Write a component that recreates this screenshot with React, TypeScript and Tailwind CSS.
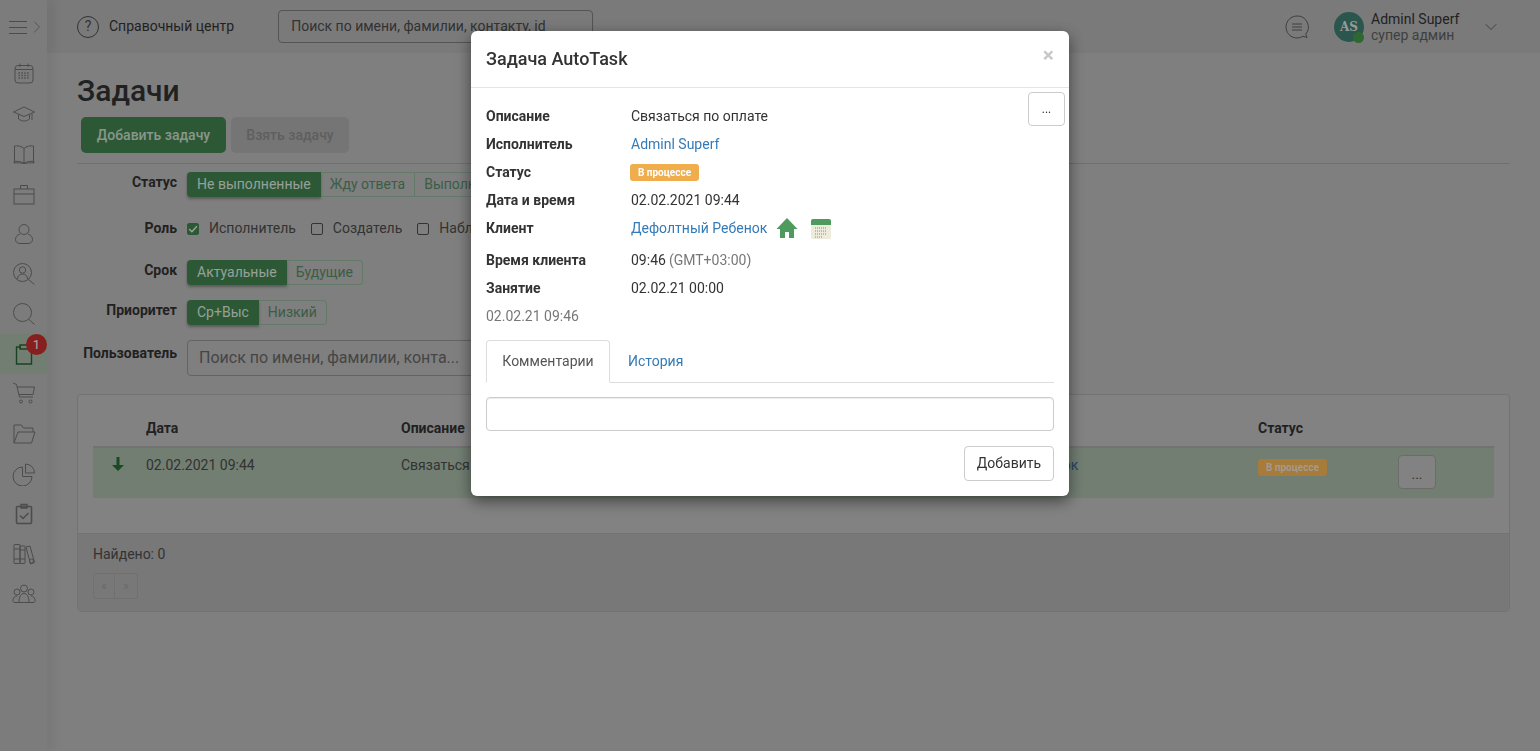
import { ChevronDown, ChevronRight } from "lucide-react";

const FONT = { fontFamily: "Roboto, sans-serif" };

// sidebar icons are thin outline drawings on a 24 box
const NAV_PATHS: React.ReactNode[] = [
  <>
    <rect x="3" y="3.500" width="18" height="17.500" rx="3" />
    <path d="M8 1.500V5M16 1.500V5M3 7.500h18" />
    <path d="M6.500 11h11M6.500 13.500h11M6.500 16h11" strokeWidth="1.400" strokeDasharray="1.400 1.500" />
  </>,
  <>
    <path d="M1.500 10L12 5l10.500 5L12 14.500z" />
    <path d="M6.500 12.500V17c2 1.500 3.500 2 5.500 2s3.500-.5 5.500-2v-4.500" />
    <path d="M20 11.500V18" />
  </>,
  <>
    <path d="M12 6.500C9.500 4 5.500 3.500 2.500 4v15.500c3.500-.5 7 0 9.500 2 2.500-2 6-2.500 9.500-2V4c-3-.5-7 0-9.500 2.500z" />
    <path d="M12 6.500v15M2.500 19.500h-.500v1.500c3.500-.5 7 0 10 .500 3-.5 6.500-1 10-.500v-1.500h-.500" />
  </>,
  <>
    <rect x="2" y="7" width="20" height="15" />
    <path d="M8.500 7V3.500h7V7M2 12h20" />
  </>,
  <>
    <circle cx="12" cy="7.500" r="5" />
    <path d="M8 12c-3 1-4.500 3-4.500 5.500 0 2.500 2 4 4.500 4h8c2.500 0 4.500-1.500 4.500-4 0-2.500-1.500-4.500-4.500-5.500" />
  </>,
  <>
    <circle cx="10.500" cy="10.500" r="9" />
    <circle cx="10.500" cy="8" r="3.200" />
    <path d="M5.500 17c0-3 2-5 5-5s5 2 5 5" />
    <path d="M16.500 17.500l6 5" />
  </>,
  <>
    <circle cx="10.500" cy="10.500" r="9" />
    <path d="M17 17.500l5.500 5" />
  </>,
  <>
    <path d="M9 5H4.500v17h15V9" strokeWidth="1.400" />
    <path d="M8 3h8v4H8z" strokeWidth="1.400" />
  </>,
  <>
    <path d="M1 1l3.500 1.500L7.500 15h13.500" />
    <path d="M5 5h17.500l-1.500 7.500H7" />
    <circle cx="9" cy="19.500" r="1.500" />
    <circle cx="18.500" cy="19.500" r="1.500" />
  </>,
  <>
    <path d="M2 21V3h7.500l2 3h9.500v4" />
    <path d="M2 21h17.500L23 10H6z" />
  </>,
  <>
    <path d="M10.500 5a9.500 9.500 0 1 0 9.500 9.500h-9.500z" />
    <path d="M13.500 2a9 9 0 0 1 9 9h-9z" />
  </>,
  <>
    <rect x="4.500" y="4.500" width="15" height="17" rx="1" strokeWidth="1.600" />
    <path d="M9 2.500h6V6H9z" strokeWidth="1.400" />
    <path d="M8 13.500l3 3 5.500-5.500" strokeWidth="1.500" />
  </>,
  <>
    <rect x="2" y="2.500" width="6" height="19" rx=".5" />
    <rect x="8" y="4" width="5" height="17.500" rx=".5" />
    <path d="M2 7h6M2 17h6M8 8h5M8 17h5" />
    <path d="M14 5l4-1 4.500 16.500-4 1.500z" />
    <circle cx="19.500" cy="19" r="2" />
  </>,
  <>
    <circle cx="12" cy="6.500" r="3.500" />
    <circle cx="5" cy="10" r="3" />
    <circle cx="19" cy="10" r="3" />
    <path d="M7 20.500c0-6 2-9 5-9s5 3 5 9z" />
    <path d="M7 20.500H3c-2 0-2.500-1.500-2-3 .5-2 2-3.500 4-3.500M17 20.500h4c2 0 2.500-1.500 2-3-.5-2-2-3.500-4-3.500" />
  </>,
];

function Sidebar() {
  return (
    <aside className="z-10 w-[47px] shrink-0 bg-[#a6a6a6] text-[#666666] shadow-[8px_0_8px_rgba(0,0,0,.05)]">
      <div className="flex h-[54px] items-center pl-[9px]">
        <div className="flex w-[18px] flex-col gap-[5px]">
          <div className="h-px bg-[#666]" />
          <div className="h-px bg-[#666]" />
          <div className="h-px bg-[#666]" />
        </div>
        <ChevronRight size={20} strokeWidth={1} />
      </div>
      {NAV_PATHS.map((icon, i) => (
        <div
          key={i}
          className={
            "relative flex h-[40px] items-center justify-center " +
            (i === 7 ? "bg-[#98a999] text-[#23582e]" : "")
          }
        >
          <svg width="24" height="24" viewBox="0 0 24 24" fill="none" stroke="currentColor" strokeWidth="1">
            {icon}
          </svg>
          {i === 7 && (
            <span className="absolute left-[26px] top-0 flex h-[21px] w-[21px] items-center justify-center rounded-full bg-[#b52a2a] text-[13px] text-[#e0e0e0]">
              1
            </span>
          )}
        </div>
      ))}
    </aside>
  );
}

function Header() {
  return (
    <header className="flex h-[53px] items-center bg-[#a3a3a3] pl-[30px] pr-[39px] text-[14px] text-[#2d2d2d]">
      <div className="flex h-[22px] w-[22px] items-center justify-center rounded-full border border-[#444] text-[14px] text-[#444]">
        ?
      </div>
      <span className="ml-[10px]">Справочный центр</span>
      <div className="ml-[44px] flex h-[33px] w-[315px] items-center rounded-[4px] border border-[#707070] pl-[12px] text-[#444]">
        Поиск по имени, фамилии, контакту, id
      </div>
      <div className="ml-auto flex items-center">
        <svg width="26" height="26" viewBox="0 0 26 26" fill="none" stroke="#555" strokeWidth="1">
          <path d="M13 2a11 11 0 1 0 6 20.200l4 1.300-1.200-3.500A11 11 0 0 0 13 2z" />
          <path d="M8 10h10M8 13h10M8 16h10" />
        </svg>
        <div
          className="relative ml-[24px] flex h-[30px] w-[30px] items-center justify-center rounded-full bg-[#3a7368] text-[12px] font-bold text-[#ccc]"
          style={{ fontFamily: "'DejaVu Serif', serif" }}
        >
          AS
          <span className="absolute left-[19px] top-[20px] h-[11px] w-[11px] rounded-full bg-[#3f8a45]" />
        </div>
        <div className="ml-[7px] w-[110px] leading-[16px]">
          <div>Adminl Superf</div>
          <div className="text-[#555]">супер админ</div>
        </div>
        <ChevronDown size={20} strokeWidth={1} className="text-[#444]" />
      </div>
    </header>
  );
}

function Group({ items }: { items: string[] }) {
  return (
    <div className="flex h-[25px] text-[14px] leading-[23px]">
      {items.map((label, i) => (
        <div
          key={label}
          className={
            i === 0
              ? "rounded-l-[4px] bg-[#3c7647] px-[10px] pt-[1px] text-[#c8d6cb] shadow-[0_2px_3px_rgba(0,0,0,.3)]"
              : "border border-l-0 border-[#86a38c] px-[9px] text-[#4f7d5b] last:rounded-r-[4px]"
          }
        >
          {label}
        </div>
      ))}
    </div>
  );
}

function Check({ label, checked }: { label: string; checked?: boolean }) {
  return (
    <div className="flex items-center text-[14px] text-[#444]">
      <div
        className={
          "flex h-[12px] w-[12px] items-center justify-center rounded-[2px] border " +
          (checked ? "border-[#3c7647] bg-[#3c7647]" : "border-[#444]")
        }
      >
        {checked && (
          <svg width="10" height="10" viewBox="0 0 9 9" fill="none" stroke="#cfdcd1" strokeWidth="1.200">
            <path d="M1 4.500l2.500 2.500L8 2" />
          </svg>
        )}
      </div>
      <span className="ml-[10px]">{label}</span>
    </div>
  );
}

function FilterRow({
  label,
  className = "",
  labelClass = "",
  children,
}: {
  label: string;
  className?: string;
  labelClass?: string;
  children: React.ReactNode;
}) {
  return (
    <div className={"flex " + className}>
      <div className={"w-[100px] text-right text-[14px] font-bold leading-[20px] text-[#2d2d2d] " + labelClass}>
        {label}
      </div>
      <div className="ml-[10px] flex-1">{children}</div>
    </div>
  );
}

function TaskPage() {
  return (
    <main className="flex-1 px-[30px]">
      <h1 className="pt-[19px] text-[30px] font-medium leading-[38px] text-[#2d2d2d]">Задачи</h1>
      <div className="ml-[4px] mt-[7px] flex gap-[5px] text-[14px] font-medium">
        <div className="flex h-[36px] w-[145px] items-center justify-center rounded-[5px] bg-[#3c7647] text-[#b8c9bb]">
          Добавить задачу
        </div>
        <div className="flex h-[36px] w-[118px] items-center justify-center rounded-[5px] bg-[#9c9c9c] text-[#7f7f7f]">
          Взять задачу
        </div>
      </div>
      <div className="mt-[10px] border-t border-[#959595]" />

      <FilterRow label="Статус" className="mt-[8px]">
        <Group items={["Не выполненные", "Жду ответа", "Выполненные", "Отменённые"]} />
      </FilterRow>
      <FilterRow label="Роль" className="mt-[21px]">
        <div className="flex h-[20px] gap-[15px] pt-[1px]">
          <Check label="Исполнитель" checked />
          <Check label="Создатель" />
          <Check label="Наблюдатель" />
        </div>
      </FilterRow>
      <FilterRow label="Срок" className="mt-[22px]">
        <Group items={["Актуальные", "Будущие"]} />
      </FilterRow>
      <FilterRow label="Приоритет" className="mt-[15px]">
        <Group items={["Ср+Выс", "Низкий"]} />
      </FilterRow>
      <FilterRow label="Пользователь" className="mt-[15px]" labelClass="pt-[3px]">
        <div className="flex h-[36px] w-[330px] items-center rounded-[4px] border border-[#858585] pl-[11px] text-[16px] text-[#5c5c5c]">
          Поиск по имени, фамилии, конта...
        </div>
      </FilterRow>

      <section className="mt-[18px] h-[218px] overflow-hidden rounded-[4px] border border-[#9a9a9a] bg-[#aeaeae]">
        <div className="px-[15px]">
          <div className="grid h-[51px] grid-cols-[53px_255px_857px_140px_1fr] items-end pb-[8px] text-[14px] font-bold leading-[20px] text-[#2d2d2d]">
            <span />
            <span>Дата</span>
            <span>Описание</span>
            <span>Статус</span>
            <span />
          </div>
          <div className="grid h-[52px] grid-cols-[53px_255px_541px_316px_140px_1fr] border-t-2 border-[#999] bg-[#98a999] text-[14px] text-[#444]">
            <span className="pl-[19px] pt-[9px] text-[#23632f]">
              <svg width="12" height="14" viewBox="0 0 12 14" fill="currentColor">
                <path d="M4.500 0h3v8H12l-6 6-6-6h4.500z" />
              </svg>
            </span>
            <span className="pt-[7px]">02.02.2021 09:44</span>
            <span className="pt-[7px]">Связаться по оплате</span>
            <span className="pt-[7px] text-[#2f5f8a]">Дефолтный Ребенок</span>
            <span className="pt-[11px]">
              <span className="block h-[17px] w-[69px] rounded-[3px] bg-[#dfa44c] text-center text-[10px] font-bold leading-[17px] text-[#d9cfc0]">
                В процессе
              </span>
            </span>
            <span className="pt-[7px]">
              <span className="block h-[34px] w-[38px] rounded-[4px] border border-[#909090] bg-[#aeaeae] pt-[8px] text-center leading-[20px]">
                ...
              </span>
            </span>
          </div>
        </div>
        <div className="mt-[35px] h-full border-t border-[#9a9a9a] bg-[#a0a0a0] px-[15px] pt-[10px] text-[14px] leading-[20px] text-[#444]">
          <div>Найдено: 0</div>
          <div className="mt-[9px] flex text-[12px] leading-[24px] text-[#8c8c8c]">
            <span className="h-[26px] w-[22px] rounded-l-[3px] border border-[#969696] text-center">«</span>
            <span className="h-[26px] w-[23px] rounded-r-[3px] border border-l-0 border-[#969696] text-center">»</span>
          </div>
        </div>
      </section>
    </main>
  );
}

function Field({ label, className = "", children }: { label: string; className?: string; children: React.ReactNode }) {
  return (
    <div className={"flex h-[28px] items-center " + className}>
      <div className="w-[145px] font-bold text-[#333]">{label}</div>
      <div className="flex items-center">{children}</div>
    </div>
  );
}

function TaskModal() {
  return (
    <div className="fixed inset-0 z-20 flex justify-center bg-black/25 pt-[31px]">
      <div className="relative h-[465px] w-[598px] rounded-[6px] bg-white text-[14px] text-[#333] shadow-[0_5px_15px_rgba(0,0,0,.5)]">
        <div className="flex h-[57px] items-center border-b border-[#e5e5e5] px-[15px] pb-[2px]">
          <h4 className="text-[18px] font-medium text-[#333]">Задача AutoTask</h4>
          <span className="-mt-[6px] ml-auto text-[21px] font-bold leading-none text-[#c8c8c8]">×</span>
        </div>
        <div className="absolute right-[4px] top-[61px] flex h-[34px] w-[37px] items-center justify-center rounded-[4px] border border-[#ccc] pb-[1px] text-[12px]">
          ...
        </div>
        <div className="px-[15px] pt-[14px]">
          <Field label="Описание">Связаться по оплате</Field>
          <Field label="Исполнитель">
            <span className="text-[#337ab7]">Adminl Superf</span>
          </Field>
          <Field label="Статус">
            <span className="-ml-px h-[17px] w-[69px] rounded-[3px] bg-[#f0ad4e] text-center text-[10px] font-bold leading-[17px] text-white">
              В процессе
            </span>
          </Field>
          <Field label="Дата и время">02.02.2021 09:44</Field>
          <Field label="Клиент">
            <span className="text-[#337ab7]">Дефолтный Ребенок</span>
            <svg className="ml-[9px]" width="22" height="22" viewBox="0 0 22 22" fill="#4f9a5d">
              <path d="M11 1L0.500 12H4v9h5v-6h4v6h5v-9h3.500z" />
            </svg>
            <svg className="ml-[12px] mt-[1px]" width="22" height="22" viewBox="0 0 22 22">
              <rect x="1" y="1" width="20" height="20" rx="2" fill="#ecebdc" />
              <path d="M1 3a2 2 0 0 1 2-2h16a2 2 0 0 1 2 2v4H1z" fill="#4f9a5d" />
              <path d="M5 10h12M5 13h12M5 16h12M5 19h8" stroke="#8a8a80" strokeWidth="1.200" strokeDasharray="1 1" />
            </svg>
          </Field>
          <Field label="Время клиента" className="mt-[4px]">
            09:46
            <span className="ml-[3px] text-[#777]">(GMT+03:00)</span>
          </Field>
          <Field label="Занятие">02.02.21 00:00</Field>
          <div className="flex h-[28px] items-center text-[#777]">02.02.21 09:46</div>

          <div className="mt-[10px] flex h-[43px] border-b border-[#ddd]">
            <div className="flex h-[43px] w-[124px] items-center justify-center rounded-t-[4px] border border-[#ddd] border-b-white text-[#555]">
              Комментарии
            </div>
            <div className="flex h-[42px] items-center px-[18px] text-[#337ab7]">История</div>
          </div>
          <div className="mt-[14px] h-[34px] rounded-[4px] border border-[#ccc] shadow-[inset_0_1px_1px_rgba(0,0,0,.075)]" />
          <div className="mt-[15px] flex justify-end">
            <div className="flex h-[35px] w-[90px] items-center justify-center rounded-[4px] border border-[#ccc]">
              Добавить
            </div>
          </div>
        </div>
      </div>
    </div>
  );
}

export default function App() {
  return (
    <div className="flex min-h-screen bg-[#aaaaaa]" style={FONT}>
      <Sidebar />
      <div className="flex min-w-0 flex-1 flex-col">
        <Header />
        <TaskPage />
      </div>
      <TaskModal />
    </div>
  );
}
